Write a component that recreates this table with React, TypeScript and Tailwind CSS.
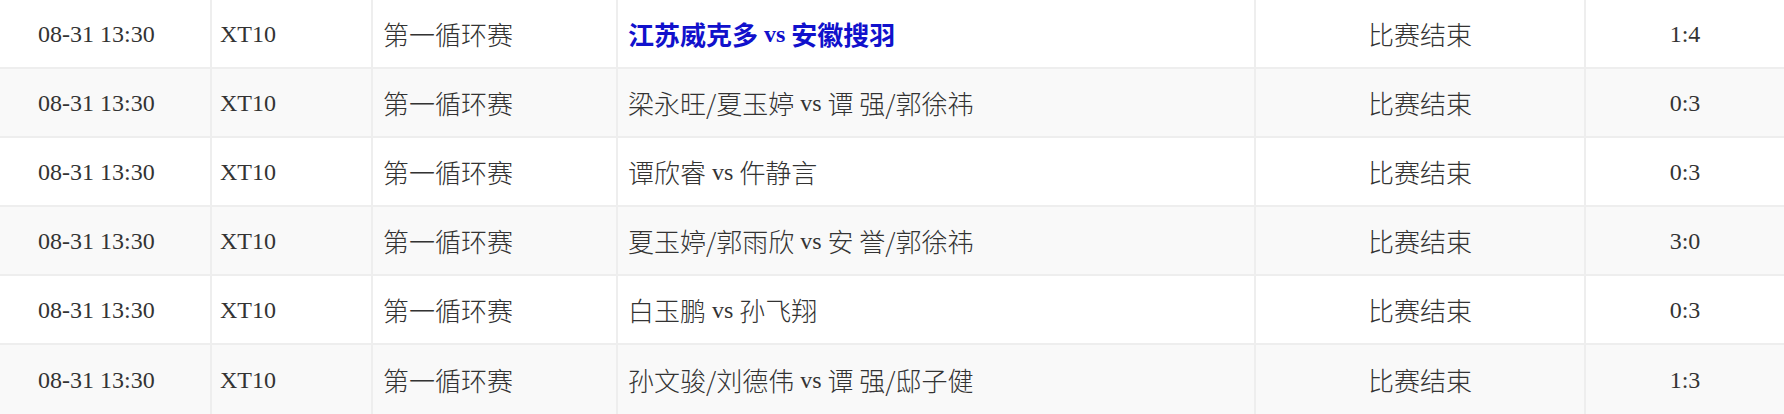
import React from "react";

interface Match {
  time: string;
  code: string;
  stage: string;
  teams: string;
  status: string;
  score: string;
  highlight?: boolean;
}

const matches: Match[] = [
  { time: "08-31 13:30", code: "XT10", stage: "第一循环赛", teams: "江苏威克多 vs 安徽搜羽", status: "比赛结束", score: "1:4", highlight: true },
  { time: "08-31 13:30", code: "XT10", stage: "第一循环赛", teams: "梁永旺/夏玉婷 vs 谭 强/郭徐祎", status: "比赛结束", score: "0:3" },
  { time: "08-31 13:30", code: "XT10", stage: "第一循环赛", teams: "谭欣睿 vs 仵静言", status: "比赛结束", score: "0:3" },
  { time: "08-31 13:30", code: "XT10", stage: "第一循环赛", teams: "夏玉婷/郭雨欣 vs 安 誉/郭徐祎", status: "比赛结束", score: "3:0" },
  { time: "08-31 13:30", code: "XT10", stage: "第一循环赛", teams: "白玉鹏 vs 孙飞翔", status: "比赛结束", score: "0:3" },
  { time: "08-31 13:30", code: "XT10", stage: "第一循环赛", teams: "孙文骏/刘德伟 vs 谭 强/邸子健", status: "比赛结束", score: "1:3" },
];

// names (with their slashes and inner spaces) render in the CJK face, a bit larger than the latin text
const CJK_RUN = /([\u4e00-\u9fff](?:[\u4e00-\u9fff/]| (?=[\u4e00-\u9fff]))*)/;

const Mixed = ({ text, bold }: { text: string; bold?: boolean }) => (
  <>
    {text.split(CJK_RUN).map((part, i) =>
      /[\u4e00-\u9fff]/.test(part) ? (
        <span
          key={i}
          className={`text-[26px] font-['Noto_Sans_CJK_SC',sans-serif] ${bold ? "font-bold" : "font-light"}`}
        >
          {part}
        </span>
      ) : (
        <span key={i}>{part}</span>
      ),
    )}
  </>
);

export default function App() {
  return (
    <div className="w-[1784px] h-[414px] overflow-hidden bg-white text-[24px] text-[#333] font-['Liberation_Serif','Noto_Sans_CJK_SC',serif]">
      {matches.map((m, i) => {
        const isLast = i === matches.length - 1;
        return (
          <div
            key={i}
            className={`grid grid-cols-[212px_161px_245px_638px_330px_198px] h-[69px] ${
              i % 2 === 1 ? "bg-[#f9f9f9]" : "bg-white"
            } ${isLast ? "" : "border-b-2 border-[#eeeeee]"}`}
          >
            <div className="flex items-center pl-[38px] border-r-2 border-[#eeeeee]">{m.time}</div>
            <div className="flex items-center pl-[8px] border-r-2 border-[#eeeeee]">{m.code}</div>
            <div className="flex items-center pl-[10px] border-r-2 border-[#eeeeee]">
              <Mixed text={m.stage} />
            </div>
            <div
              className={`flex items-center pl-[10px] border-r-2 border-[#eeeeee] whitespace-pre ${
                m.highlight ? "font-bold text-[#1111cc]" : ""
              }`}
            >
              <Mixed text={m.teams} bold={m.highlight} />
            </div>
            <div className="flex items-center justify-center border-r-2 border-[#eeeeee]">
              <Mixed text={m.status} />
            </div>
            <div className="flex items-center justify-center">{m.score}</div>
          </div>
        );
      })}
    </div>
  );
}
